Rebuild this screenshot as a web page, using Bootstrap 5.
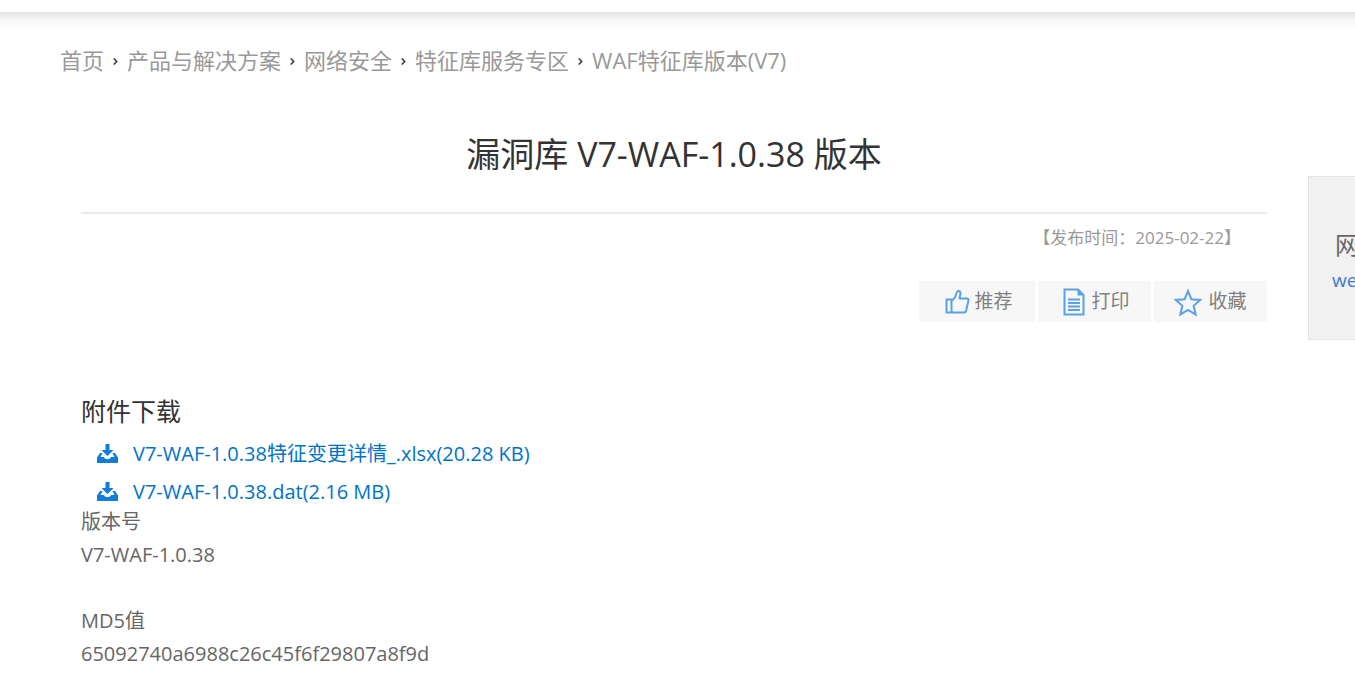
<!DOCTYPE html>
<html lang="zh-CN">
<head>
<meta charset="utf-8">
<meta name="viewport" content="width=device-width, initial-scale=1">
<title>漏洞库 V7-WAF-1.0.38 版本</title>
<link href="https://cdn.jsdelivr.net/npm/bootstrap@5.3.0/dist/css/bootstrap.min.css" rel="stylesheet">
<style>
  body { font-family: "Open Sans", "Noto Sans CJK SC", sans-serif; font-size: 20px; line-height: 33px; color: #666; background: #fff; }
  .top-bar { height: 12px; }
  .top-shade { height: 18px; background: linear-gradient(#e2e2e2, #f6f6f6 45%, #fff); }
  .page-wrap { padding: 0 88px 0 60px; }
  .crumbs { margin-top: 14px; font-size: 22px; --bs-breadcrumb-margin-bottom: 0; }
  .crumbs a { color: #999; text-decoration: none; }
  .crumbs .sep { width: 5px; height: 7px; margin: 2px 9px 0 9px; }
  .article { padding-left: 21px; }
  .article-title { font-size: 34px; line-height: 50px; font-weight: 400; color: #333; margin: 52px 0 0; padding-bottom: 33px; border-bottom: 2px solid #ebebeb; }
  .pub-date { font-size: 17px; line-height: 24px; color: #999; padding: 12px 26px 0 0; }
  .tools { gap: 3px; margin-top: 31px; }
  .tool-btn { width: 113px; height: 41px; background: #f7f7f7; color: #808080; font-size: 19px; line-height: 33px; border: 0; border-radius: 0; padding: 0; gap: 6px; }
  .tool-btn.wide { width: 116px; gap: 4px; }
  .tool-btn.inset { padding-left: 4px; }
  .files-title { font-size: 25px; line-height: 36px; font-weight: 400; color: #333; margin: 71px 0 0; }
  .files { margin: 12px 0 0; padding-left: 15px; gap: 12px; }
  .files a { color: #0073c8; text-decoration: none; gap: 14px; line-height: 26px; }
  .contact { top: 176px; width: 47px; height: 164px; padding: 51px 0 0 23px; background: #f1f1f1; border: solid #e4e4e4; border-width: 1px 0 1px 1px; overflow: hidden; white-space: nowrap; }
  .contact .zh { font-size: 24px; line-height: 34px; color: #666; padding-left: 3px; }
  .contact a { font-size: 19px; line-height: 36px; color: #3e7bc9; text-decoration: none; }
</style>
</head>
<body>
<header>
  <div class="top-bar bg-white"></div>
  <div class="top-shade"></div>
</header>

<main class="page-wrap">
  <nav aria-label="breadcrumb">
    <ol class="crumbs breadcrumb align-items-center">
      <li><a href="#">首页</a></li>
      <li class="d-flex align-items-center"><svg class="sep" viewBox="0 0 5 7" fill="none" stroke="#333" stroke-width="1.5"><path d="M.7.5l3 3-3 3"/></svg><a href="#">产品与解决方案</a></li>
      <li class="d-flex align-items-center"><svg class="sep" viewBox="0 0 5 7" fill="none" stroke="#333" stroke-width="1.5"><path d="M.7.5l3 3-3 3"/></svg><a href="#">网络安全</a></li>
      <li class="d-flex align-items-center"><svg class="sep" viewBox="0 0 5 7" fill="none" stroke="#333" stroke-width="1.5"><path d="M.7.5l3 3-3 3"/></svg><a href="#">特征库服务专区</a></li>
      <li class="d-flex align-items-center"><svg class="sep" viewBox="0 0 5 7" fill="none" stroke="#333" stroke-width="1.5"><path d="M.7.5l3 3-3 3"/></svg><a href="#">WAF特征库版本(V7)</a></li>
    </ol>
  </nav>

  <article class="article">
    <h1 class="article-title text-center">漏洞库 V7-WAF-1.0.38 版本</h1>
    <div class="pub-date text-end">【发布时间：2025-02-22】</div>

    <div class="tools d-flex justify-content-end">
      <button type="button" class="tool-btn wide inset btn d-flex align-items-center justify-content-center">
        <svg width="25" height="25" viewBox="0 0 25 25" fill="none" stroke="#5aa2e6" stroke-width="2" stroke-linejoin="round"><path d="M1.500 10.500h5v13h-5zM6.500 12 10 8.500 12 3c.4-1.500 3.500-1.500 3.500 1.500L14.500 9.500h7.500c1.200 0 1.800 1 1.500 2l-2.500 10.500c-.3 1-1 1.500-2 1.500H6.500"/></svg>推荐
      </button>
      <button type="button" class="tool-btn inset btn d-flex align-items-center justify-content-center">
        <svg width="22" height="28" viewBox="0 0 22 28" fill="none" stroke="#5aa2e6" stroke-width="2"><path d="M1.500 1.500h13.500l5.500 5.500v19.500h-19z"/><path d="M15 1v6h6z" fill="#5aa2e6" stroke-width="1"/><path d="M5 11.500h12M5 15h12M5 18.500h12M5 22h12"/></svg>打印
      </button>
      <button type="button" class="tool-btn btn d-flex align-items-center justify-content-center">
        <svg width="28" height="28" viewBox="0 0 28 28" fill="none" stroke="#5aa2e6" stroke-width="2"><path d="M14 3l3.400 8.200 9 .7-6.800 5.900 2.100 8.700L14 21.800l-7.700 4.700 2.100-8.700L1.600 11.900l9-.7z"/></svg>收藏
      </button>
    </div>

    <h2 class="files-title">附件下载</h2>
    <ul class="files list-unstyled d-flex flex-column">
      <li class="d-flex"><a class="d-flex align-items-center" href="#"><svg width="23" height="20" viewBox="0 0 23 20" fill="#0f7dd9"><path d="M9.500 0h4v6h4l-6 6-6-6h4z"/><path d="M4 9h2.500L4.500 13H8c.8 3 6.200 3 7 0h3.500L16.500 9H19l3 4.500V19H1v-5.500z"/></svg>V7-WAF-1.0.38特征变更详情_.xlsx(20.28 KB)</a></li>
      <li class="d-flex"><a class="d-flex align-items-center" href="#"><svg width="23" height="20" viewBox="0 0 23 20" fill="#0f7dd9"><path d="M9.500 0h4v6h4l-6 6-6-6h4z"/><path d="M4 9h2.500L4.500 13H8c.8 3 6.200 3 7 0h3.500L16.500 9H19l3 4.500V19H1v-5.500z"/></svg>V7-WAF-1.0.38.dat(2.16 MB)</a></li>
    </ul>

    <div>版本号</div>
    <div>V7-WAF-1.0.38</div>
    <br>
    <div>MD5值</div>
    <div>65092740a6988c26c45f6f29807a8f9d</div>
  </article>
</main>

<aside class="contact position-fixed end-0">
  <div class="zh">网</div>
  <a href="#">we</a>
</aside>
<script src="https://cdn.jsdelivr.net/npm/bootstrap@5.3.0/dist/js/bootstrap.bundle.min.js"></script>
</body>
</html>
